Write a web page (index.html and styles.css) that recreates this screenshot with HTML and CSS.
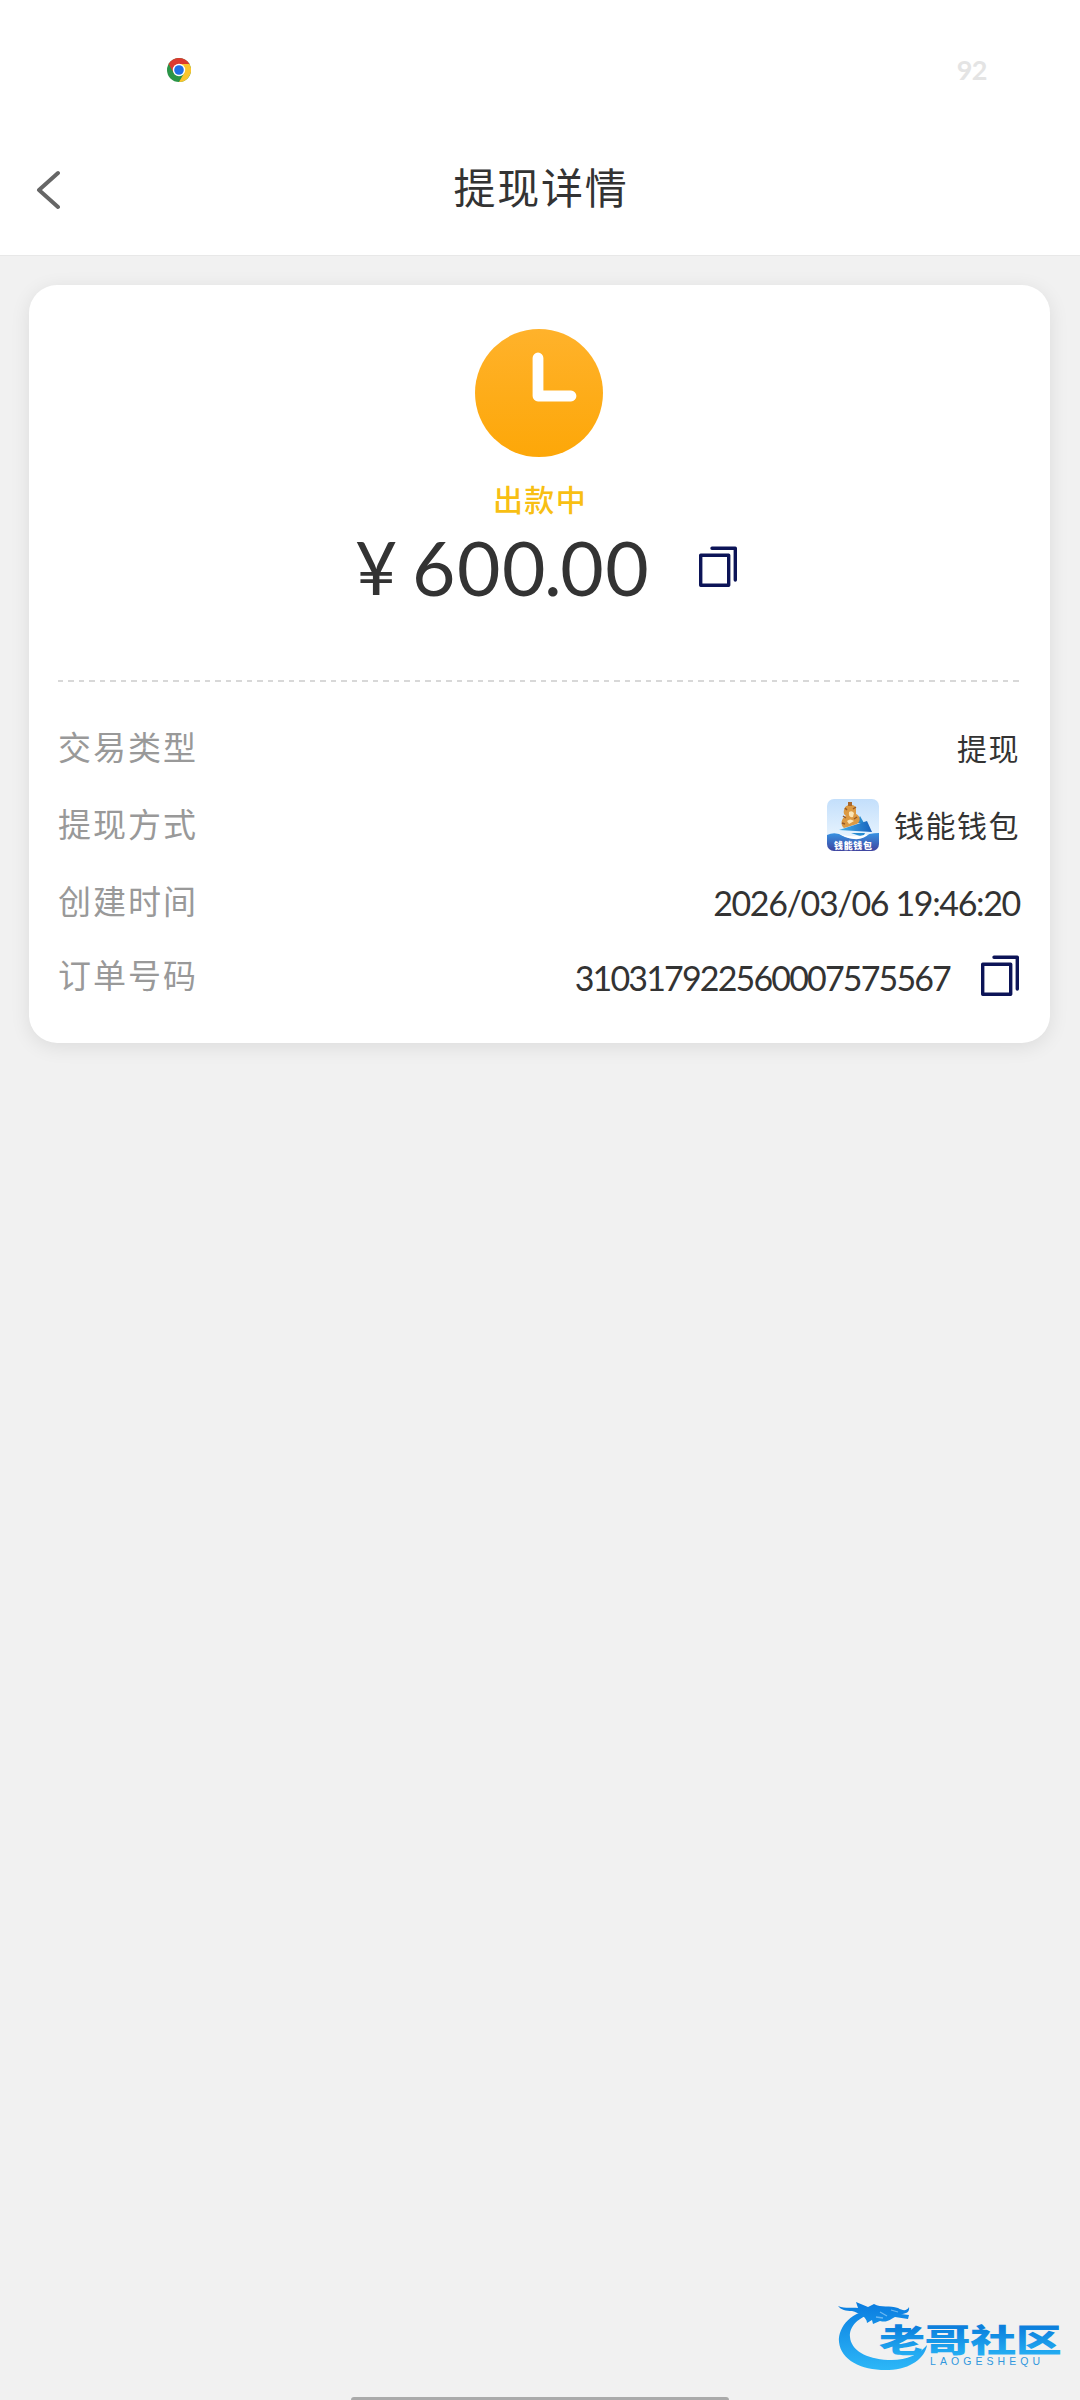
FILE: index.html
```html
<!DOCTYPE html>
<html lang="zh-CN">
<head>
    <meta charset="UTF-8">
    <meta name="viewport" content="width=device-width, initial-scale=1.0">
    <title>提现详情</title>
    <link rel="stylesheet" href="styles.css">
</head>
<body>

    <header class="header">
        <div class="status-bar">
            <svg class="chrome" viewBox="0 0 24 24">
                <circle cx="12" cy="12" r="12" fill="#2a9447"/>
                <path d="M1.6 6A12 12 0 0 1 22.4 6H12L6.8 15Z" fill="#db3a2f"/>
                <path d="M22.4 6A12 12 0 0 1 12 24L17.2 15 12 6Z" fill="#fbc52c"/>
                <circle cx="12" cy="12" r="6.2" fill="#fff"/>
                <circle cx="12" cy="12" r="4.8" fill="#1f6fe5"/>
            </svg>
            <span class="battery">92</span>
        </div>
        <nav class="nav">
            <svg class="back" viewBox="0 0 24 40">
                <path d="M22 3L3 20L22 37" fill="none" stroke="#666" stroke-width="4" stroke-linecap="round" stroke-linejoin="round"/>
            </svg>
            <h1>提现详情</h1>
        </nav>
    </header>

    <main class="card">
        <svg class="clock" viewBox="0 0 128 128">
            <defs>
                <linearGradient id="orange" x1="0" y1="0" x2="0" y2="1">
                    <stop offset="0" stop-color="#ffb22b"/>
                    <stop offset="1" stop-color="#fda708"/>
                </linearGradient>
            </defs>
            <circle cx="64" cy="64" r="64" fill="url(#orange)"/>
            <path d="M63 29V67H96" fill="none" stroke="#fff" stroke-width="10.8" stroke-linecap="round" stroke-linejoin="round"/>
        </svg>
        <p class="status">出款中</p>
        <div class="amount">
            <span class="yen">¥</span>
            <span class="number">600<span class="dot">.</span>00</span>
            <svg class="copy" viewBox="0 0 38 42">
                <path d="M1.7 9.2H29.7V39.2H1.7ZM13 2.2H36.3V34" fill="none" stroke="#0c1457" stroke-width="3.4" stroke-linecap="round" stroke-linejoin="round"/>
            </svg>
        </div>

        <div class="divider"></div>

        <div class="row">
            <span class="label">交易类型</span>
            <span class="value">提现</span>
        </div>
        <div class="row">
            <span class="label">提现方式</span>
            <span class="value">
                <svg class="wallet" viewBox="0 0 52 52">
                    <defs>
                        <clipPath id="tile"><rect width="52" height="52" rx="7"/></clipPath>
                        <linearGradient id="sky" x1="0" y1="0" x2="0" y2="1">
                            <stop offset="0" stop-color="#c3dffb"/>
                            <stop offset="1" stop-color="#f4faff"/>
                        </linearGradient>
                        <linearGradient id="sea" x1="0" y1="0" x2="0" y2="1">
                            <stop offset="0" stop-color="#3792e2"/>
                            <stop offset="1" stop-color="#4044a0"/>
                        </linearGradient>
                        <linearGradient id="sail" x1="0" y1="0" x2="1" y2="0">
                            <stop offset="0" stop-color="#46b0e8"/>
                            <stop offset="1" stop-color="#1762bd"/>
                        </linearGradient>
                    </defs>
                    <g clip-path="url(#tile)">
                        <rect width="52" height="52" fill="url(#sky)"/>
                        <path d="M29 24L33 17L37 24Z" fill="#2a8ace"/>
                        <path d="M29 9C27 4 18 5 17 11C16 15 18 16 19 17C14 19 13 26 17 29L30 25C35 21 32 16 29 15" fill="#dc9a43"/>
                        <path d="M21 3H25V7H21Z" fill="#a9672b"/>
                        <path d="M16 17L19 19M15 24L18 25M18 9L20 11M29 8L26 10M30 18L27 20" stroke="#995a27" stroke-width="1.5"/>
                        <path d="M22 13Q25 11 27 14L26 18Q21 19 22 13ZM20 22Q23 19 27 22L22 25Z" fill="#fbe5b5"/>
                        <path d="M12 31L40 22L45 33Z" fill="url(#sail)"/>
                        <path d="M24 34H38L36 38Z" fill="#268bd1"/>
                        <path d="M0 36Q8 32 17 37T34 38T52 34V52H0Z" fill="url(#sea)"/>
                        <path d="M11 34Q22 40 42 35Q36 41 27 40Q17 39 11 34Z" fill="#fff"/>
                        <text x="7" y="49.5" textLength="38">钱能钱包</text>
                    </g>
                </svg>
                钱能钱包
            </span>
        </div>
        <div class="row">
            <span class="label">创建时间</span>
            <span class="value digits date">2026/03/06 19:46:20</span>
        </div>
        <div class="row last">
            <span class="label">订单号码</span>
            <span class="value">
                <span class="digits order">310317922560007575567</span>
                <svg class="copy" viewBox="0 0 38 42">
                    <path d="M1.7 9.2H29.7V39.2H1.7ZM13 2.2H36.3V34" fill="none" stroke="#0c1457" stroke-width="3.4" stroke-linecap="round" stroke-linejoin="round"/>
                </svg>
            </span>
        </div>
    </main>

    <!-- community logo, floats over the page -->
    <svg class="watermark" viewBox="0 0 230 80">
        <defs>
            <linearGradient id="blue" gradientUnits="userSpaceOnUse" x1="0" y1="5" x2="0" y2="72">
                <stop offset="0" stop-color="#0a7de0"/>
                <stop offset="1" stop-color="#2db8f8"/>
            </linearGradient>
            <linearGradient id="word" x1="0" y1="0" x2="0" y2="1">
                <stop offset="0.2" stop-color="#0c80dd"/>
                <stop offset="1" stop-color="#27b3f5"/>
            </linearGradient>
        </defs>
        <path d="M37 10C14 12 0 27 1 43C3 62 25 72 51 71C73 70 87 59 89 46C81 56 67 62 50 61C28 60 13 51 12 38C11 27 21 18 34 15Z" fill="url(#blue)"/>
        <path d="M0 7C8 10 14 8 20 9L18 3L30 8L36 5C43 9 52 6 60 9C65 12 69 12 71 8C72 13 68 15 63 15L71 16L70 20L57 18C52 20 50 24 42 22L35 25L34 21L29 24C29 18 21 14 14 12C8 12 3 11 0 7Z" fill="url(#blue)"/>
        <path d="M42 13L49 17M53 11L60 13M38 18L45 19" stroke="#6cb8f1" stroke-width="1.3"/>
        <g transform="translate(41 52.5) scale(1.44 1)">
            <text class="brand" x="0" y="0" textLength="127">老哥社区</text>
        </g>
        <text class="brand-en" x="92" y="65.5" textLength="110">LAOGESHEQU</text>
    </svg>

    <div class="home-bar"></div>

</body>
</html>
```
FILE: styles.css
```css
* {
    margin: 0;
    padding: 0;
    box-sizing: border-box;
}

body {
    height: 2400px;
    overflow: hidden;
    background-color: #f1f1f1;
    color: #333;
    font-family: 'Lato', 'Noto Sans CJK SC', sans-serif;
}

svg {
    display: block;
    flex-shrink: 0;
}

.header {
    height: 256px;
    background-color: #fff;
    border-bottom: 1px solid #e8e8e8;
}

.status-bar {
    display: flex;
    justify-content: space-between;
    align-items: center;
    height: 139px;
    padding: 0 93px 0 167px;
}

.chrome {
    width: 24px;
    height: 24px;
}

.battery {
    font-size: 27px;
    font-weight: bold;
    letter-spacing: -0.5px;
    color: #e4e4e4;
}

.nav {
    display: grid;
    grid-template-columns: 60px 1fr 60px;
    align-items: center;
    height: 102px;
}

.back {
    width: 24px;
    height: 40px;
    margin-left: 36px;
}

h1 {
    font-size: 42px;
    font-weight: normal;
    letter-spacing: 1.7px;
    line-height: 60px;
    margin-top: -5px;
    padding-left: 2px;
    text-align: center;
}

.card {
    height: 758px;
    margin: 29px 30px 0 29px;
    padding: 44px 30px 0 29px;
    background-color: #fff;
    border-radius: 28px;
    box-shadow: 0 4px 20px rgba(0, 0, 0, 0.09);
}

.clock {
    width: 128px;
    height: 128px;
    margin: 0 auto;
}

.status {
    margin-top: 20px;
    padding-left: 2px;
    font-size: 30px;
    font-weight: 500;
    letter-spacing: 1.4px;
    line-height: 44px;
    text-align: center;
    color: #f8bf13;
}

.amount {
    display: flex;
    align-items: center;
    height: 92px;
    padding-left: 297px;
    font-size: 75px;
}

.yen {
    width: 57px;
    font-size: 73px;
}

.number {
    width: 240px;
    letter-spacing: 1.5px;
}

.dot {
    margin: 0 -3px;
}

.copy {
    width: 38px;
    height: 42px;
}

.amount .copy {
    margin-left: 47px;
}

.divider {
    height: 2px;
    margin-right: 1px;
    margin-top: 67px;
    margin-bottom: 27px;
    background: repeating-linear-gradient(90deg, #d8d8d8 0 5.25px, transparent 5.25px 10.5px);
}

.row {
    display: flex;
    justify-content: space-between;
    align-items: center;
    height: 77px;
}

.row.last {
    height: 71px;
}

.label {
    margin-top: -3px;
    font-size: 33px;
    letter-spacing: 2px;
    color: #999;
}

.value {
    display: flex;
    align-items: center;
    margin-top: -2px;
    font-size: 30px;
    letter-spacing: 1.5px;
}

.wallet {
    width: 52px;
    height: 52px;
    margin-top: 3px;
    margin-right: 15px;
}

.wallet text {
    font-size: 9px;
    font-weight: 900;
    letter-spacing: 0;
    fill: #fff;
}

.digits {
    margin-top: 2px;
    font-size: 34px;
}

.date {
    letter-spacing: -1.35px;
}

.order {
    margin-right: 31px;
    letter-spacing: -1.85px;
}

.row.last .value {
    margin-top: 1px;
    padding-right: 1px;
}

.watermark {
    position: absolute;
    left: 838px;
    top: 2299px;
    width: 230px;
    height: 80px;
}

.brand {
    font-size: 32px;
    font-weight: 900;
    fill: url(#word);
}

.brand-en {
    font-family: 'Liberation Sans', sans-serif;
    font-size: 10.5px;
    fill: #3298dd;
}

.home-bar {
    position: absolute;
    left: 351px;
    bottom: 0;
    width: 378px;
    height: 3px;
    background-color: #aaa;
    border-radius: 3px 3px 0 0;
}
```
